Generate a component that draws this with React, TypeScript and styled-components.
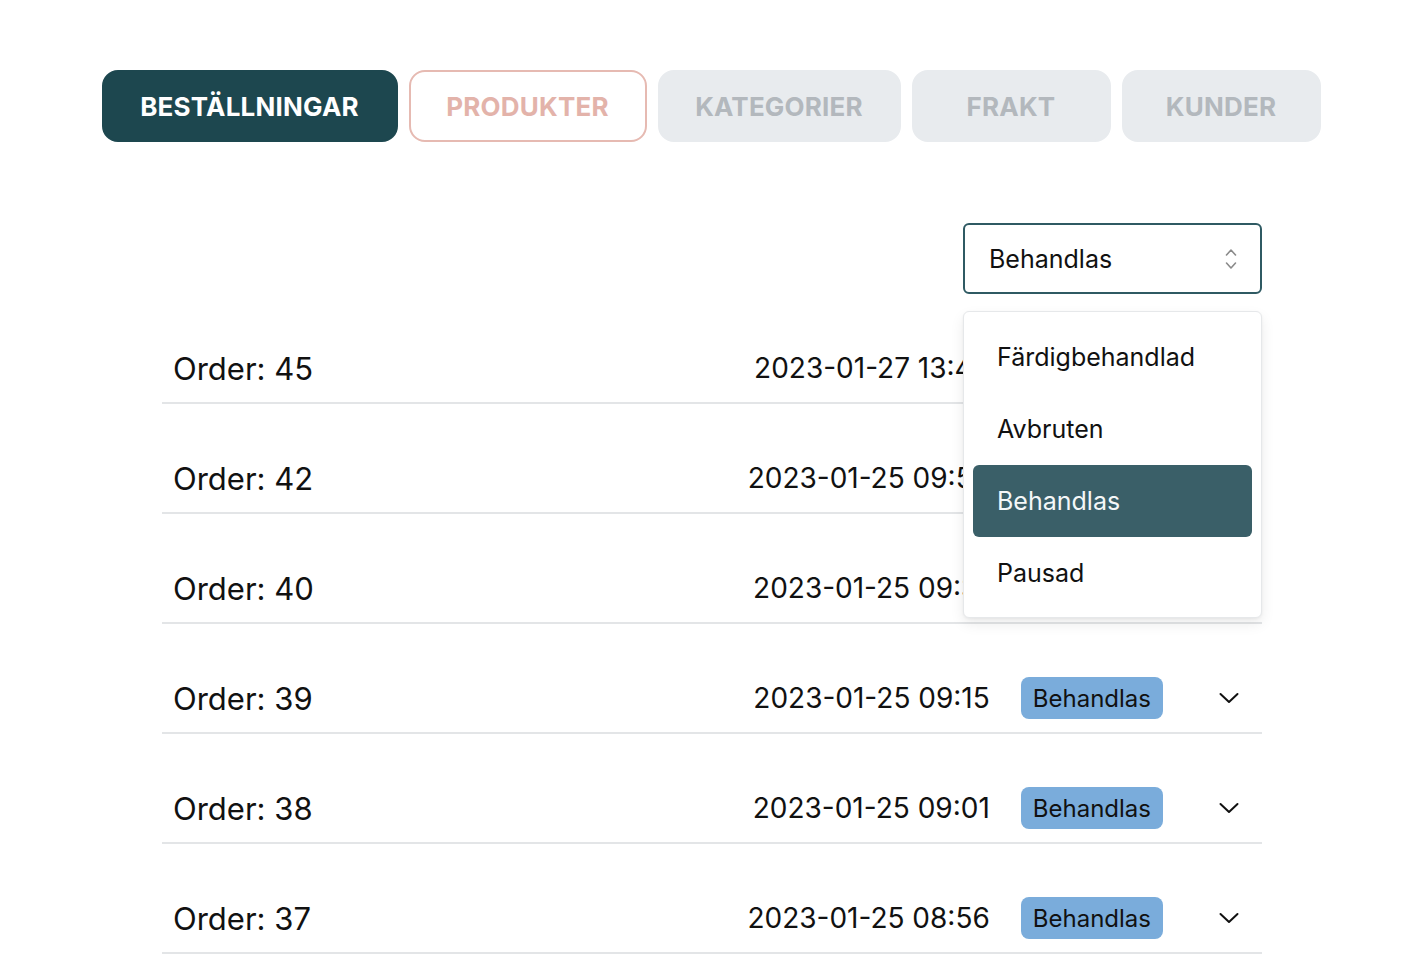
import React from "react";
import styled, { createGlobalStyle } from "styled-components";

const Global = createGlobalStyle`
  html, body { margin: 0; padding: 0; background: #ffffff; }
  body { font-family: Inter, "Noto Sans", "Liberation Sans", sans-serif; color: #111; }
  * { box-sizing: border-box; }
`;

const Page = styled.div`
  width: 1424px;
  min-height: 972px;
  padding-top: 70px;
  display: flex;
  flex-direction: column;
  align-items: center;
`;

const Tabs = styled.nav`
  display: flex;
  gap: 11px;
  margin-left: -2px;
`;

type TabKind = "active" | "outline" | "muted";

const Tab = styled.button<{ $kind: TabKind; $w: number }>`
  width: ${(p) => p.$w}px;
  height: 72px;
  border-radius: 16px;
  font-family: Inter, "Noto Sans", sans-serif;
  font-weight: 700;
  font-size: 26px;
  letter-spacing: 0.2px;
  display: flex;
  align-items: center;
  justify-content: center;
  cursor: pointer;
  border: 2px solid
    ${(p) => (p.$kind === "active" ? "#1d474f" : p.$kind === "outline" ? "#e6bab2" : "#e8ebee")};
  background: ${(p) => (p.$kind === "active" ? "#1d474f" : p.$kind === "outline" ? "#ffffff" : "#e8ebee")};
  color: ${(p) => (p.$kind === "active" ? "#ffffff" : p.$kind === "outline" ? "#e3b3aa" : "#b3b8bd")};
`;

const Content = styled.section`
  width: 1100px;
  margin-top: 81px;
  display: flex;
  flex-direction: column;
`;

const FilterBar = styled.div`
  display: flex;
  justify-content: flex-end;
`;

const SelectWrap = styled.div`
  position: relative;
  width: 299px;
`;

const SelectBox = styled.div`
  height: 71px;
  border: 2px solid #2f5a63;
  border-radius: 6px;
  padding: 0 22px 0 24px;
  display: flex;
  align-items: center;
  justify-content: space-between;
  font-size: 25px;
  color: #111;
  background: #fff;
`;

const Menu = styled.ul`
  position: absolute;
  top: 88px;
  left: 0;
  width: 299px;
  margin: 0;
  list-style: none;
  padding: 9px 9px 8px 9px;
  background: #fff;
  border: 1px solid #e6e8ea;
  border-radius: 6px;
  box-shadow: 0 6px 14px rgba(0, 0, 0, 0.08), 0 1px 3px rgba(0, 0, 0, 0.05);
  z-index: 10;
`;

const MenuItem = styled.li<{ $active?: boolean }>`
  height: 72px;
  padding-left: 24px;
  display: flex;
  align-items: center;
  font-size: 25px;
  border-radius: 6px;
  background: ${(p) => (p.$active ? "#3a5f68" : "transparent")};
  color: ${(p) => (p.$active ? "#f4f7f8" : "#111")};
`;

const Row = styled.div`
  height: 110px;
  padding: 53px 23px 13px 11px;
  border-bottom: 2px solid #e3e5e7;
  display: flex;
  align-items: center;
`;

const OrderLabel = styled.span`
  font-size: 31px;
  color: #111;
  flex: 1;
`;

const DateText = styled.span`
  font-size: 28px;
  color: #111;
`;

const Badge = styled.span`
  margin-left: 31px;
  height: 42px;
  padding: 0 12px;
  border-radius: 8px;
  background: #7aacdb;
  color: #111;
  font-size: 24px;
  display: flex;
  align-items: center;
`;

const Toggle = styled.span`
  margin-left: 56px;
  width: 20px;
  display: flex;
  align-items: center;
  justify-content: center;
`;

const UpDown = () => (
  <svg width="14" height="24" viewBox="0 0 14 24" fill="none" stroke="#8a8a8a" strokeWidth="1.6" strokeLinecap="round" strokeLinejoin="round">
    <polyline points="2.5,8 7,3 11.5,8" />
    <polyline points="2.5,16 7,21 11.5,16" />
  </svg>
);

const Chevron = () => (
  <svg width="20" height="12" viewBox="0 0 20 12" fill="none" stroke="#111" strokeWidth="2" strokeLinecap="round" strokeLinejoin="round">
    <polyline points="1.5,2 10,10 18.5,2" />
  </svg>
);

const tabs: { label: string; kind: TabKind; w: number }[] = [
  { label: "BESTÄLLNINGAR", kind: "active", w: 296 },
  { label: "PRODUKTER", kind: "outline", w: 238 },
  { label: "KATEGORIER", kind: "muted", w: 243 },
  { label: "FRAKT", kind: "muted", w: 199 },
  { label: "KUNDER", kind: "muted", w: 199 },
];

const orders = [
  { id: 45, date: "2023-01-27 13:42" },
  { id: 42, date: "2023-01-25 09:52" },
  { id: 40, date: "2023-01-25 09:31" },
  { id: 39, date: "2023-01-25 09:15" },
  { id: 38, date: "2023-01-25 09:01" },
  { id: 37, date: "2023-01-25 08:56" },
];

const options = ["Färdigbehandlad", "Avbruten", "Behandlas", "Pausad"];

export default function App() {
  return (
    <>
      <Global />
      <Page>
        <Tabs>
          {tabs.map((t) => (
            <Tab key={t.label} $kind={t.kind} $w={t.w}>
              {t.label}
            </Tab>
          ))}
        </Tabs>
        <Content>
          <FilterBar>
            <SelectWrap>
              <SelectBox>
                <span>Behandlas</span>
                <UpDown />
              </SelectBox>
              <Menu>
                {options.map((o) => (
                  <MenuItem key={o} $active={o === "Behandlas"}>
                    {o}
                  </MenuItem>
                ))}
              </Menu>
            </SelectWrap>
          </FilterBar>
          {orders.map((o) => (
            <Row key={o.id}>
              <OrderLabel>Order: {o.id}</OrderLabel>
              <DateText>{o.date}</DateText>
              <Badge>Behandlas</Badge>
              <Toggle>
                <Chevron />
              </Toggle>
            </Row>
          ))}
        </Content>
      </Page>
    </>
  );
}
